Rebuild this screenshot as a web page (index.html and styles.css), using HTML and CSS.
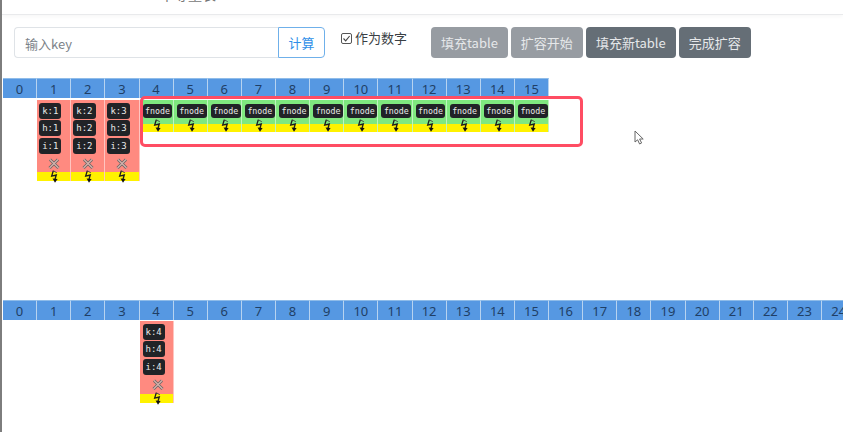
FILE: index.html
```html
<!DOCTYPE html>
<html lang="en">
<head>
    <meta charset="UTF-8">
    <meta name="viewport" content="width=device-width, initial-scale=1.0">
    <title>HashMap 扩容</title>
    <link rel="stylesheet" href="styles.css">
</head>
<body>

    <svg width="0" height="0" class="defs">
        <symbol id="bolt" viewBox="0 0 10 14">
            <path d="M3.2 .8 1.4 6.6 6.4 5.4 5 10" fill="none" stroke="#1c1c1c" stroke-width="1.4"/>
            <path d="M2.4 9.2 5 13.6 7.8 9.6Z" fill="#111"/>
            <path d="M3.2 .8 7 3" fill="none" stroke="#444" stroke-width="1"/>
        </symbol>
        <symbol id="cross" viewBox="0 0 12 12">
            <path d="M2 1.5 10.5 10M10 1.5 1.5 10" fill="none" stroke="#6d6866" stroke-width="3"/>
            <path d="M2 1.5 10.5 10M10 1.5 1.5 10" fill="none" stroke="#d8b3ae" stroke-width="1.2"/>
        </symbol>
    </svg>

    <header class="topbar"><span class="topbar-title">中等量表</span></header>

    <div class="toolbar">
        <div class="key-group">
            <input class="key-input" type="text" placeholder="输入key">
            <button class="calc-btn" type="button">计算</button>
        </div>
        <label class="as-number"><span class="checkmark">
            <svg width="11" height="11" viewBox="0 0 11 11"><path d="M2.5 5.5 4.7 7.8 8.6 3" fill="none" stroke="#444" stroke-width="1.1"/></svg>
        </span>作为数字</label>
        <div class="actions">
            <button class="btn btn-off" type="button">填充table</button>
            <button class="btn btn-off" type="button">扩容开始</button>
            <button class="btn" type="button">填充新table</button>
            <button class="btn" type="button">完成扩容</button>
        </div>
    </div>

    <section class="table-view first">
        <div class="indexes" id="oldIndexes"></div>
        <div class="slots" id="oldSlots"></div>
        <div class="highlight"></div>
    </section>

    <section class="table-view second">
        <div class="indexes" id="newIndexes"></div>
        <div class="slots" id="newSlots"></div>
    </section>

    <svg class="pointer" width="11" height="15" viewBox="0 0 11 15">
        <path d="M1 1V12L3.6 9.8 5.6 14 7.6 13 5.6 9H9.2Z" fill="#fff" stroke="#666" stroke-width="1"/>
    </svg>

    <script>
        var BOLT = '<svg class="ico-bolt" width="10" height="13"><use href="#bolt"/></svg>';
        var CROSS = '<svg class="ico-cross" width="12" height="12"><use href="#cross"/></svg>';

        function indexCells(id, count) {
            var html = "";
            for (var i = 0; i < count; i++) {
                html += '<div class="index">' + i + '</div>';
            }
            document.getElementById(id).innerHTML = html;
        }

        function nodeCell(n) {
            return '<div class="slot node">' +
                '<span class="tag">k:' + n + '</span>' +
                '<span class="tag">h:' + n + '</span>' +
                '<span class="tag">i:' + n + '</span>' +
                CROSS +
                '<div class="slot-foot">' + BOLT + '</div></div>';
        }

        function forwardCell() {
            return '<div class="slot forward"><span class="tag">fnode</span>' +
                '<div class="slot-foot">' + BOLT + '</div></div>';
        }

        indexCells("oldIndexes", 16);
        indexCells("newIndexes", 25);

        var oldHtml = '<div class="slot"></div>';
        for (var n = 1; n <= 3; n++) oldHtml += nodeCell(n);
        for (var f = 4; f <= 15; f++) oldHtml += forwardCell();
        document.getElementById("oldSlots").innerHTML = oldHtml;

        var newHtml = "";
        for (var e = 0; e < 4; e++) newHtml += '<div class="slot"></div>';
        newHtml += nodeCell(4);
        document.getElementById("newSlots").innerHTML = newHtml;
    </script>

</body>
</html>
```

FILE: styles.css
```css
html, body {
    margin: 0;
    height: 432px;
    overflow: hidden;
}

body {
    position: relative;
    background: #fff;
    border-left: 2px solid #7d7d7d;
    box-sizing: border-box;
    font-family: "Noto Sans CJK SC", "Noto Sans", sans-serif;
    color: #212529;
}

.defs {
    position: absolute;
}

.topbar {
    height: 14px;
    border-bottom: 1px solid #e9eaec;
    overflow: hidden;
    box-shadow: 0 2px 4px rgba(0, 0, 0, 0.03);
}

.topbar-title {
    display: block;
    margin: -16px 0 0 158px;
    font-size: 14px;
    line-height: 20px;
    color: #777;
}

.toolbar {
    display: flex;
    align-items: flex-start;
    padding: 12px 0 0 12px;
    height: 51px;
}

.key-group {
    display: flex;
    width: 311px;
    height: 31px;
}

.key-input {
    flex: 1;
    min-width: 0;
    padding: 1px 10px 0;
    border: 1px solid #dfe3e7;
    border-right: none;
    border-radius: 4px 0 0 4px;
    font-family: inherit;
    font-size: 13px;
}

.key-input::placeholder {
    color: #7b8288;
}

.calc-btn {
    width: 47px;
    border: 1px solid #6fb0ea;
    border-radius: 0 4px 4px 0;
    background: #fff;
    color: #2f8fe8;
    font-family: inherit;
    font-size: 13px;
    padding: 0;
}

.as-number {
    display: flex;
    align-items: center;
    gap: 3px;
    margin: 1px 0 0 16px;
    font-size: 13px;
    line-height: 20px;
    color: #3a3f44;
}

.checkmark {
    display: block;
    width: 11px;
    height: 11px;
    border: 1px solid #555;
    border-radius: 2px;
    box-sizing: border-box;
}

.checkmark svg {
    display: block;
    margin: -1px;
}

.actions {
    display: flex;
    gap: 3px;
    margin-left: 24px;
}

.btn {
    height: 31px;
    padding: 0 10px;
    border: none;
    border-radius: 4px;
    background: #656e76;
    color: #e6e8ea;
    font-family: inherit;
    font-size: 13px;
}

.btn-off {
    background: #979ca2;
}

.table-view {
    position: relative;
    margin-left: 1px;
    width: 900px;
}

.second {
    position: absolute;
    top: 300px;
    left: 1px;
    margin-left: 0;
}

.indexes {
    display: flex;
    height: 20px;
}

.index {
    flex: 0 0 34.125px;
    box-sizing: border-box;
    border-top: 1px solid #8fbce9;
    border-right: 1px solid #b7d3f0;
    background: #5698e2;
    color: #1f3f66;
    font-family: "Noto Sans", sans-serif;
    font-size: 13px;
    line-height: 20px;
    text-align: center;
}

.slots {
    display: flex;
    align-items: flex-start;
    margin-top: 2px;
}

.second .slots {
    margin-top: 1px;
}

.slot {
    flex: 0 0 34.125px;
    box-sizing: border-box;
    display: flex;
    flex-direction: column;
    align-items: flex-start;
    border-right: 1px solid rgba(255, 255, 255, 0.5);
}

.node {
    background: #ff8a80;
    padding: 3px 0 0 2px;
    height: 81px;
}

.second .node {
    height: 82px;
    padding-left: 3px;
}

.forward {
    background: #7fe87f;
    padding: 4px 0 0 3px;
    height: 32px;
}

.tag {
    display: block;
    flex: none;
    margin-bottom: 1.4px;
    padding: 0 3px;
    height: 16px;
    border-radius: 3px;
    background: #212327;
    color: #e9e9e9;
    font-family: "DejaVu Sans Mono", monospace;
    font-size: 9px;
    line-height: 16px;
}

.forward .tag {
    height: 14px;
    padding: 0 2.5px;
    font-size: 8.3px;
    line-height: 14px;
}

.ico-cross {
    flex: none;
    margin: 3px 0 0 9px;
}

.slot-foot {
    margin: auto 0 0 -2px;
    align-self: stretch;
    height: 9px;
    background: #fff200;
    display: flex;
    justify-content: center;
}

.forward .slot-foot {
    margin-left: -3px;
    height: 8px;
}

.second .slot-foot {
    margin-left: -3px;
}

.ico-bolt {
    flex: none;
    margin: -2px 0 0 3px;
}

.forward .ico-bolt {
    margin-top: -5px;
}

.highlight {
    position: absolute;
    left: 137px;
    top: 18px;
    width: 443px;
    height: 51px;
    box-sizing: border-box;
    border: 3px solid #ff4d63;
    border-radius: 5px;
}

.pointer {
    position: absolute;
    left: 632px;
    top: 130px;
}
```
